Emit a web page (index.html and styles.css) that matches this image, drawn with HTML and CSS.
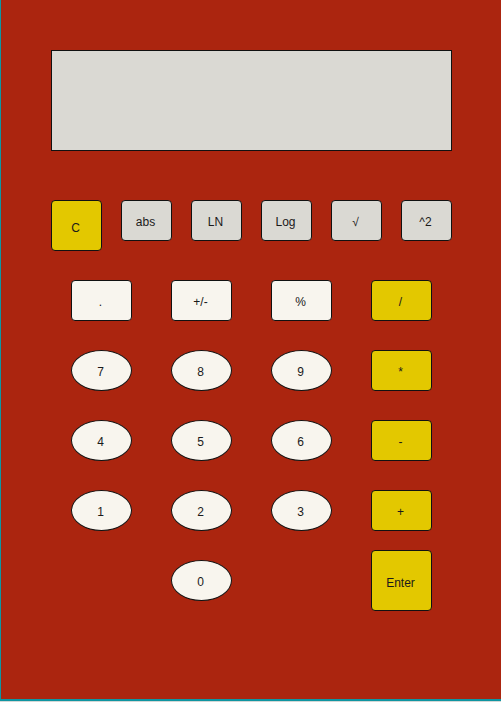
FILE: index.html
```html
<!DOCTYPE html>
<html>
<head>
<meta charset="utf-8">
<link rel="stylesheet" href="styles.css">
</head>
<body>
<div class="calc">
  <div class="display"></div>
  <div class="fn-row">
    <div class="key key-yellow key-clear">C</div>
    <div class="key key-gray">abs</div>
    <div class="key key-gray">LN</div>
    <div class="key key-gray">Log</div>
    <div class="key key-gray">√</div>
    <div class="key key-gray">^2</div>
  </div>
  <div class="pad">
    <div class="key key-cream">.</div>
    <div class="key key-cream">+/-</div>
    <div class="key key-cream">%</div>
    <div class="key key-yellow">/</div>

    <div class="key key-cream oval">7</div>
    <div class="key key-cream oval">8</div>
    <div class="key key-cream oval">9</div>
    <div class="key key-yellow">*</div>

    <div class="key key-cream oval">4</div>
    <div class="key key-cream oval">5</div>
    <div class="key key-cream oval">6</div>
    <div class="key key-yellow">-</div>

    <div class="key key-cream oval">1</div>
    <div class="key key-cream oval">2</div>
    <div class="key key-cream oval">3</div>
    <div class="key key-yellow">+</div>

    <div class="spacer"></div>
    <div class="key key-cream oval">0</div>
    <div class="spacer"></div>
    <div class="key key-yellow key-enter">Enter</div>
  </div>
</div>
</body>
</html>
```

FILE: styles.css
```css
html, body {
  margin: 0;
  padding: 0;
}

body {
  background: #d4d8d6;
  width: 501px;
  height: 702px;
  overflow: hidden;
}

.calc {
  box-sizing: border-box;
  width: 501px;
  height: 701px;
  background: #ab250f;
  border-left: 1px solid #0f95a1;
  border-bottom: 2px solid #0f95a1;
  padding: 50px 0 0 50px;
  font-family: "Liberation Sans", Arial, sans-serif;
  font-size: 12px;
  color: #1a1a1a;
}

.display {
  box-sizing: border-box;
  width: 401px;
  height: 101px;
  background: #dad9d3;
  border: 1px solid #111;
}

.fn-row {
  display: flex;
  align-items: flex-start;
  gap: 19px;
  margin-top: 49px;
}

.key {
  box-sizing: border-box;
  display: flex;
  align-items: center;
  justify-content: center;
  border: 1px solid #111;
  border-radius: 4px;
  padding: 2px 2px 0 0;
}

.fn-row .key {
  width: 51px;
  height: 41px;
}

.fn-row .key-clear {
  height: 51px;
  padding-top: 4px;
}

.key-yellow {
  background: #e3c800;
}

.key-gray {
  background: #dad9d3;
}

.key-cream {
  background: #f8f5ee;
}

.pad {
  display: grid;
  grid-template-columns: repeat(4, 61px);
  grid-auto-rows: 41px;
  column-gap: 39px;
  row-gap: 29px;
  margin-top: 29px;
  margin-left: 20px;
}

.pad .key {
  height: 41px;
}

.oval {
  border-radius: 50%;
}

.pad .key-enter {
  height: 61px;
  margin-top: -10px;
  padding-top: 4px;
}
```
